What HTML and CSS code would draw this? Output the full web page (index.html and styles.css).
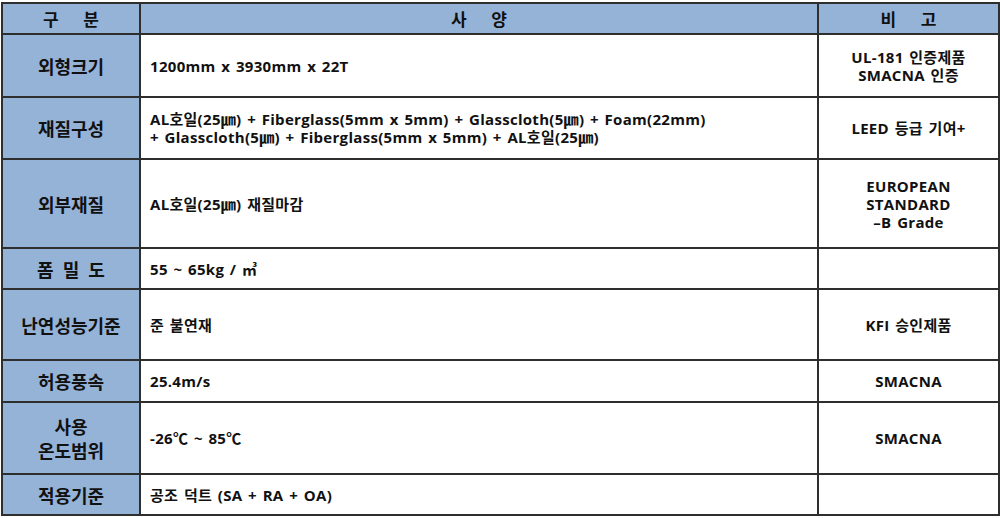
FILE: index.html
```html
<!DOCTYPE html>
<html lang="ko">
<head>
<meta charset="utf-8">
<link rel="stylesheet" href="styles.css">
</head>
<body>
<table class="spec">
  <colgroup>
    <col class="c-label">
    <col class="c-spec">
    <col class="c-note">
  </colgroup>
  <thead>
    <tr class="r-head">
      <th>구 분</th>
      <th>사 양</th>
      <th>비 고</th>
    </tr>
  </thead>
  <tbody>
    <tr class="r1">
      <th>외형크기</th>
      <td class="spec-cell">1200mm x 3930mm x 22T</td>
      <td class="note">UL-181 인증제품<br>SMACNA 인증</td>
    </tr>
    <tr class="r2">
      <th>재질구성</th>
      <td class="spec-cell">AL호일(25㎛) + Fiberglass(5mm x 5mm) + Glasscloth(5㎛) + Foam(22mm)<br>+ Glasscloth(5㎛) + Fiberglass(5mm x 5mm) + AL호일(25㎛)</td>
      <td class="note">LEED 등급 기여+</td>
    </tr>
    <tr class="r3">
      <th>외부재질</th>
      <td class="spec-cell">AL호일(25㎛) 재질마감</td>
      <td class="note">EUROPEAN<br>STANDARD<br>–B Grade</td>
    </tr>
    <tr class="r4">
      <th class="spaced">폼 밀 도</th>
      <td class="spec-cell">55 ~ 65kg / ㎥</td>
      <td class="note"></td>
    </tr>
    <tr class="r5">
      <th>난연성능기준</th>
      <td class="spec-cell">준 불연재</td>
      <td class="note">KFI 승인제품</td>
    </tr>
    <tr class="r6">
      <th>허용풍속</th>
      <td class="spec-cell">25.4m/s</td>
      <td class="note">SMACNA</td>
    </tr>
    <tr class="r7">
      <th><span class="ln">사용</span><span class="ln">온도범위</span></th>
      <td class="spec-cell">-26℃ ~ 85℃</td>
      <td class="note">SMACNA</td>
    </tr>
    <tr class="r8">
      <th>적용기준</th>
      <td class="spec-cell">공조 덕트 (SA + RA + OA)</td>
      <td class="note"></td>
    </tr>
  </tbody>
</table>
</body>
</html>
```

FILE: styles.css
```css
html, body {
  margin: 0;
  padding: 0;
  background: #ffffff;
}

body {
  padding: 2px 0 0 1px;
  font-family: "Open Sans", "Noto Sans CJK KR", sans-serif;
  color: #111111;
}

.spec {
  border-collapse: collapse;
  table-layout: fixed;
  width: 997px;
}

.c-label { width: 138px; }
.c-spec { width: 678px; }
.c-note { width: 181px; }

.spec th,
.spec td {
  border: 2px solid #2e2e2e;
  padding: 0;
  vertical-align: middle;
}

.spec th {
  background: #95b3d7;
  font-family: "Noto Sans CJK KR", sans-serif;
  font-size: 18px;
  font-weight: 700;
  text-align: center;
  line-height: 22px;
}

.r-head th {
  font-size: 17px;
  height: 29px;
  word-spacing: 20px;
}

.spaced {
  word-spacing: 4px;
}

.spec td {
  font-size: 15px;
  font-weight: 700;
  line-height: 18px;
  letter-spacing: 0.3px;
  word-spacing: 1.5px;
}

.spec-cell {
  text-align: left;
  padding-left: 9px !important;
}

.note {
  text-align: center;
}

.ln {
  display: block;
  line-height: 24px;
}

.r1 th { height: 61px; }
.r2 th { height: 60px; }
.r3 th { height: 87px; }
.r4 th { height: 39px; }
.r5 th { height: 69px; }
.r6 th { height: 40px; }
.r7 th { height: 70px; }
.r8 th { height: 39px; }
```
